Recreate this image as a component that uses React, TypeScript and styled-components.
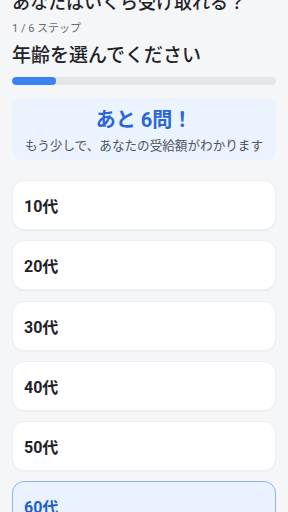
import React from "react";
import styled, { createGlobalStyle } from "styled-components";

const Global = createGlobalStyle`
  html, body { margin: 0; padding: 0; background: #f5f6f8; }
  body { font-family: Roboto, "Noto Sans CJK JP", sans-serif; color: #1f2328; }
  * { box-sizing: border-box; }
`;

const Page = styled.div`
  padding: 0 12px 40px;
  display: flex;
  flex-direction: column;
`;

const Title = styled.h1`
  margin: -9px 0 0;
  font-size: 18px;
  line-height: 24px;
  font-weight: 500;
  color: #1f2328;
`;

const Step = styled.div`
  margin-top: 6px;
  font-size: 11px;
  line-height: 16px;
  color: #666b73;
`;

const Heading = styled.h2`
  margin: 6px 0 0;
  font-size: 19px;
  line-height: 26px;
  font-weight: 500;
  color: #1f2328;
`;

const Track = styled.div`
  margin-top: 8px;
  height: 8px;
  border-radius: 4px;
  background: #e4e6ea;
  overflow: hidden;
`;

const Fill = styled.div`
  height: 100%;
  border-radius: 4px;
  background: #3b82f0;
`;

const Info = styled.div`
  margin-top: 13px;
  padding: 9px 8px 5px;
  border-radius: 10px;
  background: #eaf3fe;
  text-align: center;
`;

const Remain = styled.div`
  font-size: 20px;
  line-height: 26px;
  font-weight: 700;
  color: #2a67d6;
`;

const InfoSub = styled.div`
  margin-top: 4px;
  font-size: 12.6px;
  line-height: 18px;
  color: #4f555d;
  white-space: nowrap;
`;

const Options = styled.div`
  margin-top: 20px;
  display: flex;
  flex-direction: column;
  gap: 10.3px;
`;

const Option = styled.button<{ $selected?: boolean }>`
  display: flex;
  align-items: center;
  height: 50px;
  padding: 0 11px;
  border-radius: 12px;
  border: 1px solid ${(p) => (p.$selected ? "#8fb3f4" : "#eceef1")};
  background: ${(p) => (p.$selected ? "#eaf2ff" : "#ffffff")};
  box-shadow: 0 1px 2px rgba(0, 0, 0, 0.04);
  font-family: inherit;
  font-size: 16px;
  font-weight: 700;
  color: ${(p) => (p.$selected ? "#1f5fd0" : "#1f2328")};
  text-align: left;
  cursor: pointer;
`;

const ages = ["10代", "20代", "30代", "40代", "50代", "60代", "70代以上"];

export default function App() {
  const step = 1;
  const total = 6;
  return (
    <>
      <Global />
      <Page>
        <Title>あなたはいくら受け取れる？</Title>
        <Step>1 / 6 ステップ</Step>
        <Heading>年齢を選んでください</Heading>
        <Track>
          <Fill style={{ width: `${(step / total) * 100}%` }} />
        </Track>
        <Info>
          <Remain>あと 6問！</Remain>
          <InfoSub>もう少しで、あなたの受給額がわかります</InfoSub>
        </Info>
        <Options>
          {ages.map((a) => (
            <Option key={a} $selected={a === "60代"}>
              {a}
            </Option>
          ))}
        </Options>
      </Page>
    </>
  );
}
